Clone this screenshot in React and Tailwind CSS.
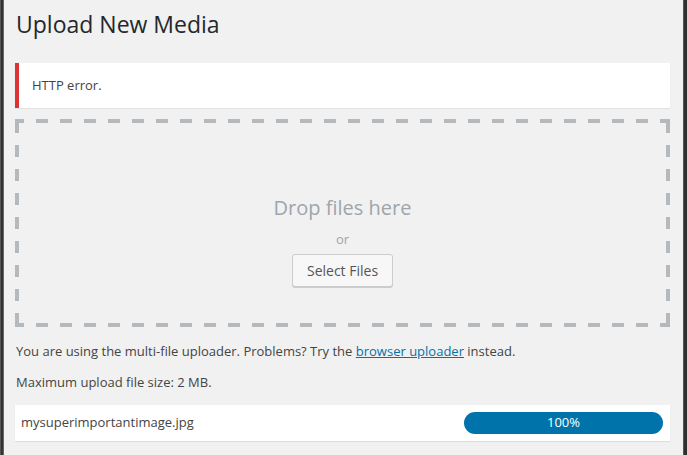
import React from 'react';

export default function App() {
  return (
    <div
      className="flex h-[455px] w-[687px] overflow-hidden bg-[#f1f1f1] text-[#444]"
      style={{ fontFamily: '"Open Sans", "Noto Sans", sans-serif' }}
    >
      {/* left window edge */}
      <div className="flex w-[4px] shrink-0">
        <div className="w-[1px] bg-[#555]" />
        <div className="w-[2px] bg-[#333]" />
        <div className="w-[1px] bg-[#666]" />
      </div>

      <div className="flex-1 pl-[11px] pr-[13px]">
        <h1 className="pt-[10px] pl-[1px] text-[23px] leading-[29px] font-normal text-[#23282d]">Upload New Media</h1>

        <div className="mt-[24px] flex h-[45px] items-center border-l-4 border-[#dc3232] bg-white pl-[13px] text-[13px] shadow-[0_1px_1px_rgba(0,0,0,0.06)]">
          HTTP error.
        </div>

        {/* drop zone, dashes drawn as 12px on / 12px off like the original */}
        <div className="mt-[11px] flex h-[208px] flex-col items-center p-[4px] pt-[75px] [background-image:linear-gradient(90deg,#b4b9be_12px,transparent_12px),linear-gradient(90deg,#b4b9be_12px,transparent_12px),linear-gradient(180deg,#b4b9be_12px,transparent_12px),linear-gradient(180deg,#b4b9be_12px,transparent_12px)] [background-size:24px_4px,24px_4px,4px_24px,4px_24px] [background-position:-3px_0,-3px_100%,0_2px,100%_2px] [background-repeat:repeat-x,repeat-x,repeat-y,repeat-y]">
          <div className="text-[20px] leading-[28px] text-[#a0a5aa]">Drop files here</div>
          <div className="mt-[8px] text-[13px] leading-[18px] text-[#a0a5aa]">or</div>
          <button className="mt-[6px] h-[33px] rounded-[3px] border border-[#ccc] bg-[#f7f7f7] px-[14px] text-[14px] text-[#555] shadow-[0_1px_0_#ccc]">
            Select Files
          </button>
        </div>

        <p className="mt-[14px] pl-[1px] text-[13px] leading-[20px]">
          You are using the multi-file uploader. Problems? Try the{' '}
          <a href="#" className="text-[#0073aa] underline">browser uploader</a> instead.
        </p>
        <p className="mt-[11px] pl-[1px] text-[13px] leading-[20px]">Maximum upload file size: 2 MB.</p>

        <div className="mt-[13px] flex h-[36px] items-center justify-between bg-white pl-[6px] pr-[7px] text-[13px] shadow-[0_1px_1px_rgba(0,0,0,0.08)]">
          <span>mysuperimportantimage.jpg</span>
          <div className="flex h-[22px] w-[199px] items-center justify-center rounded-full bg-[#0073aa] text-[13px] text-white">
            100%
          </div>
        </div>
      </div>

      {/* right window edge */}
      <div className="flex w-[4px] shrink-0">
        <div className="w-[1px] bg-[#555]" />
        <div className="w-[3px] bg-[#2f2f2f]" />
      </div>
    </div>
  );
}
